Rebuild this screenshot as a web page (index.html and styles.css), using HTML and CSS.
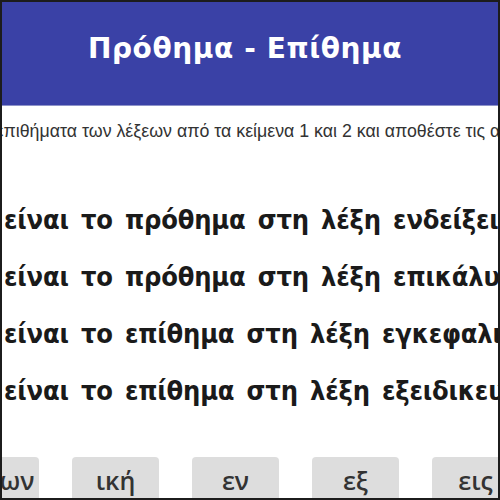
FILE: index.html
```html
<!DOCTYPE html>
<html lang="el">
<head>
<meta charset="utf-8">
<title>Πρόθημα - Επίθημα</title>
<link rel="stylesheet" href="styles.css">
</head>
<body>
<div class="frame">
  <header class="topbar">
    <h1 class="title">Πρόθημα - Επίθημα</h1>
  </header>
  <div class="stage">
    <main class="content">
      <p class="instruction">Τα προθήματα και τα επιθήματα των λέξεων από τα κείμενα 1 και 2 και αποθέστε τις απαντήσεις σας στα κενά.</p>
      <div class="rows">
        <div class="row"><span class="blank"></span>είναι το πρόθημα στη λέξη ενδείξεις</div>
        <div class="row"><span class="blank"></span>είναι το πρόθημα στη λέξη επικάλυψη</div>
        <div class="row"><span class="blank"></span>είναι το επίθημα στη λέξη εγκεφαλική</div>
        <div class="row"><span class="blank"></span>είναι το επίθημα στη λέξη εξειδικευμένων</div>
      </div>
      <div class="choices">
        <span class="chip">μένων</span>
        <span class="chip">ική</span>
        <span class="chip">εν</span>
        <span class="chip">εξ</span>
        <span class="chip">εις</span>
        <span class="chip">επι</span>
      </div>
    </main>
  </div>
</div>
</body>
</html>
```
FILE: styles.css
```css
html, body {
  margin: 0;
  padding: 0;
  background: #ffffff;
}

.frame {
  box-sizing: border-box;
  width: 500px;
  height: 500px;
  border: 2px solid #1c1c1c;
  overflow: hidden;
  display: flex;
  flex-direction: column;
}

.topbar {
  flex: none;
  box-sizing: border-box;
  height: 104px;
  background: #3a41a6;
  border-bottom: 1px solid #8e93c9;
  display: flex;
  align-items: center;
  justify-content: center;
  padding-right: 10px;
  padding-bottom: 10px;
}

.title {
  margin: 0;
  color: #ffffff;
  font-family: "DejaVu Sans", sans-serif;
  font-weight: bold;
  font-size: 28px;
  letter-spacing: 0.6px;
}

.stage {
  flex: 1;
  display: flex;
  justify-content: center;
  overflow: hidden;
}

.content {
  flex: none;
  width: 846px;
  display: flex;
  flex-direction: column;
}

.instruction {
  margin: 15px 0 0;
  text-align: left;
  white-space: nowrap;
  font-family: "Liberation Sans", Arial, sans-serif;
  font-size: 17.8px;
  line-height: 20px;
  color: #333333;
}

.rows {
  margin-top: 50px;
  display: flex;
  flex-direction: column;
}

.row {
  white-space: nowrap;
  font-family: "DejaVu Sans Condensed", "DejaVu Sans", sans-serif;
  font-weight: bold;
  font-size: 27px;
  line-height: 57px;
  color: #1a1a1a;
  word-spacing: 4px;
  letter-spacing: -0.2px;
}

.blank {
  display: inline-block;
  width: 177px;
}

.choices {
  margin-top: 38px;
  display: flex;
  gap: 33px;
  padding-left: 125px;
}

.chip {
  flex: none;
  width: 87px;
  height: 46px;
  background: #dddddd;
  border-radius: 4px;
  display: flex;
  align-items: center;
  justify-content: center;
  font-family: "Open Sans", sans-serif;
  font-weight: 600;
  font-size: 25px;
  color: #333333;
}
```
